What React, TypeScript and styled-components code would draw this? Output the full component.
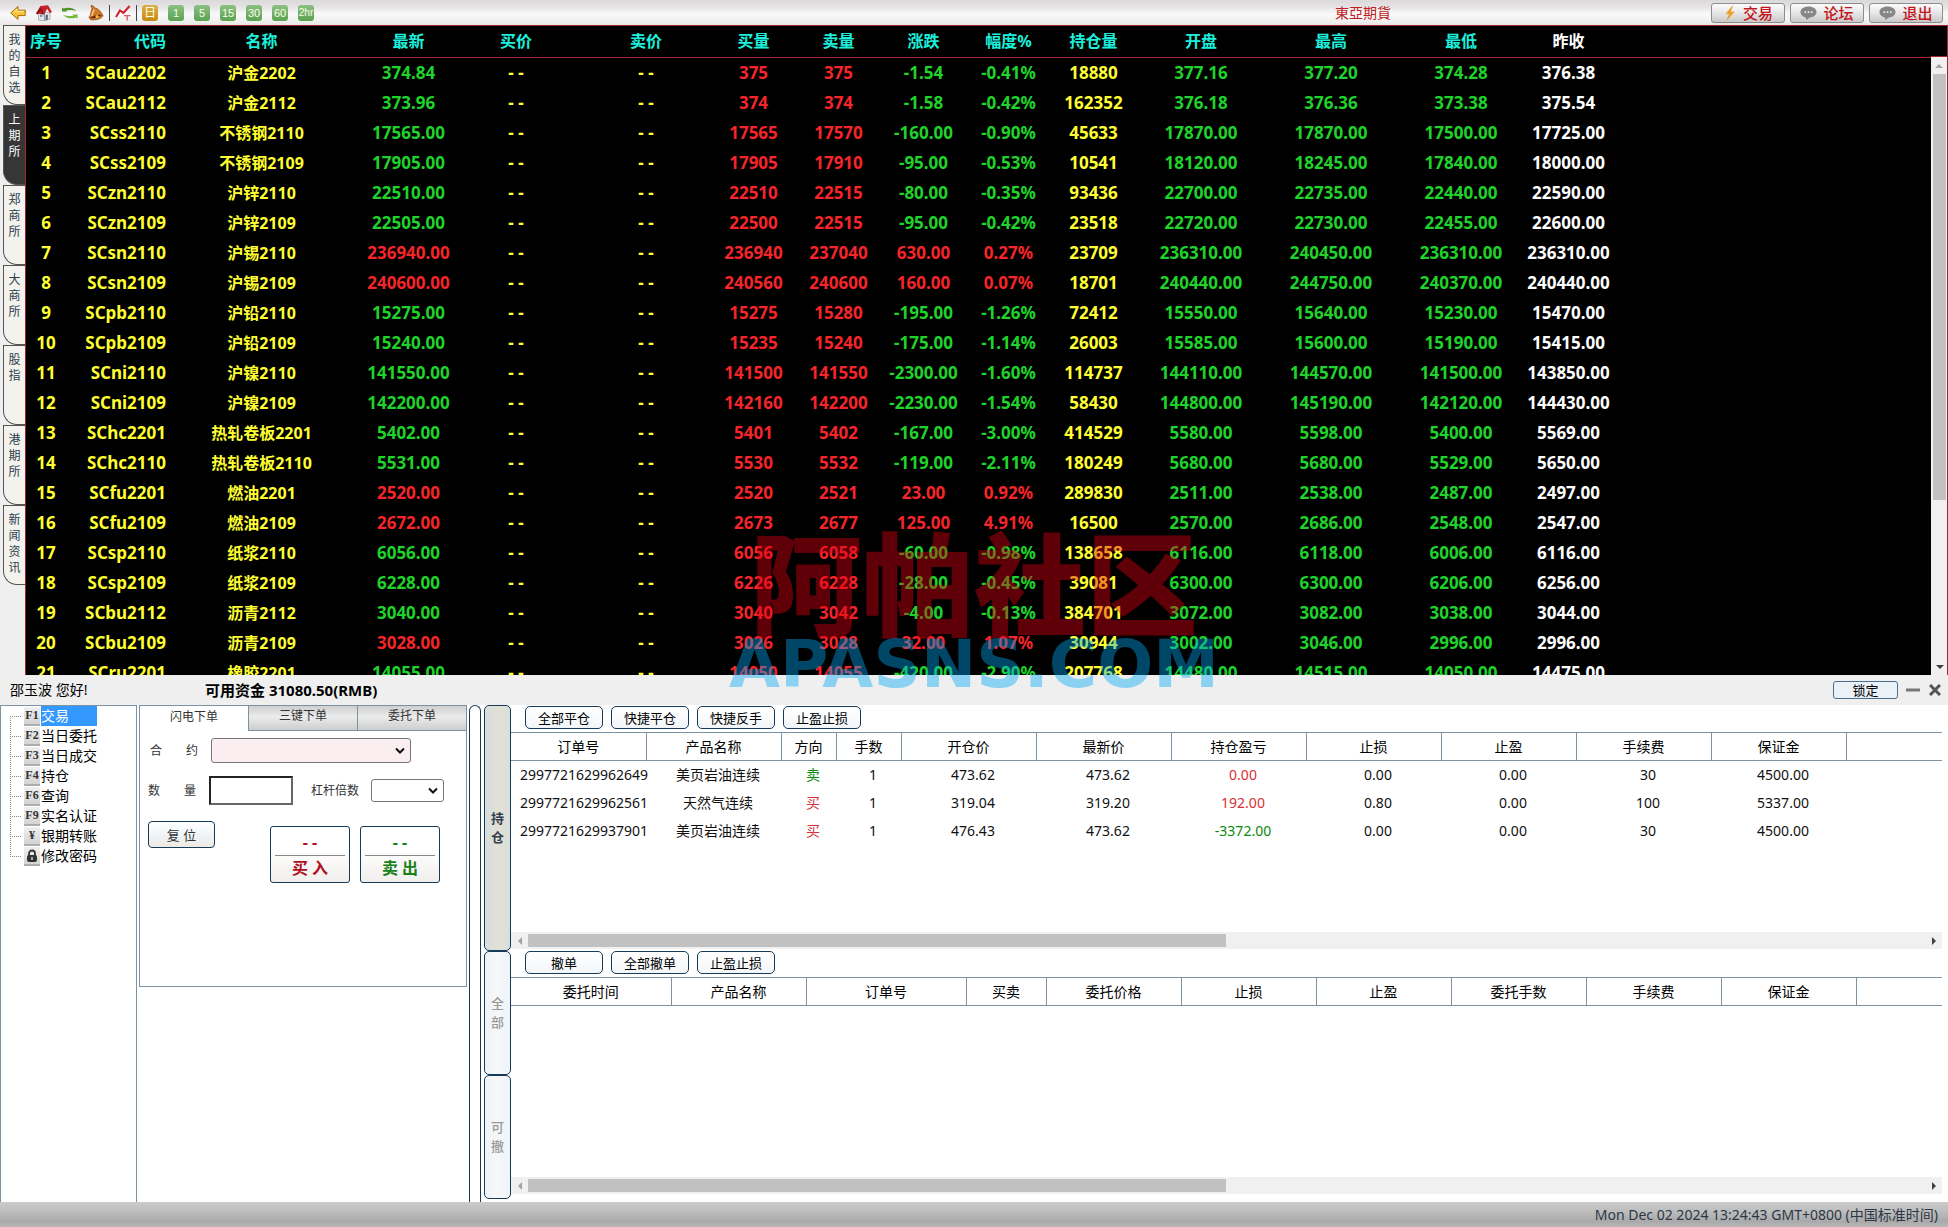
import React, { useState } from "react";
import styled, { createGlobalStyle, css } from "styled-components";

const SANS = `"Noto Sans", "Noto Sans CJK SC", sans-serif`;
const NAVY = "#163a58";
const LINE = "#7c93a6";

const GlobalStyle = createGlobalStyle`
  *, *::before, *::after { box-sizing: border-box; }
  body { margin: 0; background: #efefef; font-family: ${SANS}; font-size: 14px; color: #000; }
  button, input, select { font-family: inherit; color: inherit; margin: 0; padding: 0; }
  button { cursor: pointer; }
  table { border-collapse: collapse; border-spacing: 0; table-layout: fixed; width: 100%; }
  th, td { padding: 0; }
`;

const Page = styled.div`
  display: flex;
  flex-direction: column;
  height: 100vh;
  overflow: hidden;
`;

/* ---------- toolbar ---------- */

const Toolbar = styled.header`
  display: flex;
  align-items: center;
  height: 25px;
  flex: none;
  padding: 0 5px 0 10px;
  background: linear-gradient(#dbd9d9 0%, #e6e4e4 30%, #faf9f9 55%, #f3f2f2 80%, #e8e5e5 100%);
`;

const IconGroup = styled.div`
  display: flex;
  gap: 10px;
`;

const IconButton = styled.button`
  width: 16px;
  height: 16px;
  border: 0;
  background: none;
  display: block;
  svg { display: block; }
`;

const Divider = styled.span`
  width: 1px;
  height: 16px;
  margin: 0 5px;
  background: #444;
`;

const PeriodButton = styled.button<{ $day?: boolean; $long?: boolean }>`
  width: 16px;
  height: 16px;
  border: 0;
  border-radius: 3px;
  font-family: "Liberation Sans", "Noto Sans CJK SC", sans-serif;
  font-size: ${(p) => (p.$day ? 12 : p.$long ? 10 : 11)}px;
  line-height: 16px;
  text-align: center;
  white-space: nowrap;
  color: #fffbe8;
  background: ${(p) =>
    p.$day ? "linear-gradient(#d9b04a, #c58a10)" : "linear-gradient(#8cc084, #5aa350)"};
  display: flex;
  justify-content: center;
`;

const Brand = styled.span`
  margin-left: auto;
  margin-right: 320px;
  font-size: 14px;
  line-height: 20px;
  color: #c01c24;
`;

const HeaderActions = styled.div`
  display: flex;
  gap: 5px;
`;

const HeaderButton = styled.button`
  display: flex;
  align-items: center;
  justify-content: center;
  gap: 6px;
  width: 74px;
  height: 20px;
  border: 1px solid #8d8d8d;
  border-radius: 3px;
  background: linear-gradient(#fbfbfb, #e9e9e9 45%, #c9c9c9);
  font-size: 15px;
  font-weight: 500;
  line-height: 18px;
  color: #c3161c;
`;

/* ---------- quotes ---------- */

const QuoteArea = styled.main`
  position: relative;
  display: flex;
  flex: 1;
  min-height: 0;
`;

const MarketTabs = styled.nav`
  display: flex;
  flex-direction: column;
  width: 25px;
  flex: none;
  padding-left: 3px;
  background: #efefef;
`;

const MarketTab = styled.button<{ $active?: boolean }>`
  display: flex;
  justify-content: center;
  align-items: flex-start;
  width: 22px;
  height: 80px;
  padding-top: 6px;
  border: 1px solid #555;
  border-right: 0;
  border-bottom-left-radius: 14px;
  font-size: 12px;
  line-height: 16px;
  color: ${(p) => (p.$active ? "#fff" : "#2c3e50")};
  background: ${(p) => (p.$active ? "#363636" : "#f3f2ec")};
  span { width: 12px; word-break: break-all; }
`;

const QuotePanel = styled.div`
  display: flex;
  flex: 1;
  min-width: 0;
  overflow: hidden;
  background: #000;
  border: 1px solid #a3252d;
  border-bottom: 0;
`;

const QuoteScroll = styled.div`
  flex: 1;
  min-width: 0;
  overflow: hidden;
`;

const QuoteTable = styled.table`
  font-weight: 700;
  text-align: center;
  white-space: nowrap;
`;

const QuoteHead = styled.th<{ $white?: boolean }>`
  height: 31px;
  border-bottom: 1px solid #a3252d;
  font-size: 16px;
  line-height: 20px;
  color: ${(p) => (p.$white ? "#fff" : "#1cf0dc")};
`;

type Tone = "yellow" | "green" | "red" | "white";
const tones: Record<Tone, string> = {
  yellow: "#ffff32",
  green: "#1fd32b",
  red: "#f5252a",
  white: "#ffffff",
};

const QuoteCell = styled.td<{ $tone: Tone }>`
  height: 30px;
  padding-top: 1px;
  font-size: 17px;
  line-height: 20px;
  color: ${(p) => tones[p.$tone]};
`;

const CodeHead = styled(QuoteHead)`text-align: right;`;
const CodeCell = styled(QuoteCell)`text-align: right;`;
const NameHead = styled(QuoteHead)`padding-right: 9px;`;
const NameCell = styled(QuoteCell)`padding-right: 9px; font-size: 16px;`;

const QuoteRail = styled.div`
  display: flex;
  flex-direction: column;
  width: 16px;
  flex: none;
`;

const RailCap = styled.div`
  height: 31px;
  flex: none;
  border-bottom: 1px solid #a3252d;
`;

const VTrack = styled.div`
  display: flex;
  flex-direction: column;
  align-items: center;
  flex: 1;
  background: #f0f0f0;
`;

const VThumb = styled.div`
  width: 13px;
  height: 69%;
  background: #c1c1c1;
`;

const RailArrow = styled.button<{ $end?: boolean }>`
  display: flex;
  align-items: center;
  justify-content: center;
  width: 17px;
  height: 17px;
  flex: none;
  border: 0;
  background: none;
  ${(p) => p.$end && css`margin: auto 0 0 auto;`}
`;

const Watermark = styled.div`
  position: absolute;
  left: 0;
  right: 0;
  bottom: -22px;
  z-index: 2;
  text-align: center;
  pointer-events: none;
  white-space: nowrap;
`;

const WatermarkName = styled.div`
  font-family: "Noto Sans CJK SC", sans-serif;
  font-weight: 900;
  font-size: 112px;
  line-height: 108px;
  color: rgba(226, 0, 19, 0.42);
`;

const WatermarkSite = styled.div`
  font-family: "DejaVu Sans", sans-serif;
  font-weight: 700;
  font-size: 66px;
  line-height: 64px;
  color: rgba(0, 170, 245, 0.42);
`;

/* ---------- account bar ---------- */

const AccountBar = styled.div`
  display: flex;
  align-items: center;
  height: 30px;
  flex: none;
  padding: 0 6px 0 10px;
  background: #efefef;
  line-height: 20px;
`;

const Greeting = styled.span`width: 195px;`;
const Funds = styled.strong`
  margin-right: auto;
  font-size: 15px;
`;

const LockButton = styled.button`
  width: 65px;
  height: 18px;
  border: 1px solid #4a6f90;
  border-radius: 3px;
  background: #eaf1f7;
  font-size: 13px;
  line-height: 16px;
`;

const WindowButton = styled.button`
  display: flex;
  align-items: center;
  justify-content: center;
  width: 14px;
  height: 16px;
  margin-left: 8px;
  border: 0;
  background: none;
`;

/* ---------- lower area ---------- */

const Desk = styled.section`
  display: flex;
  flex: none;
  background: #fff;
`;

const TreePanel = styled.nav`
  width: 137px;
  flex: none;
  padding: 0 0 0 9px;
  border: 1px solid ${LINE};
  border-bottom: 0;
`;

const TreeList = styled.ul`
  margin: 0;
  padding: 0;
  list-style: none;
`;

const TreeItem = styled.li`
  display: flex;
  align-items: center;
  height: 20px;
  background:
    repeating-linear-gradient(90deg, #888 0 1px, transparent 1px 2px) 0 10px / 12px 1px no-repeat,
    repeating-linear-gradient(180deg, #888 0 1px, transparent 1px 2px) 0 0 / 1px 100% no-repeat;
  &:first-child {
    background-position: 0 10px, 0 10px;
    background-size: 12px 1px, 1px 10px;
  }
  &:last-child { background-size: 12px 1px, 1px 10px; }
`;

const TreeKey = styled.span`
  display: flex;
  align-items: center;
  justify-content: center;
  width: 16px;
  height: 19px;
  margin: 1px 1px 0 14px;
  border-bottom: 2px solid #adadad;
  background: linear-gradient(#f0f0f0, #d4d4d4);
  font-family: "Liberation Serif", serif;
  font-size: 12px;
  font-weight: 700;
  line-height: 17px;
  color: #333;
`;

const TreeLink = styled.a<{ $active?: boolean }>`
  min-width: ${(p) => (p.$active ? 56 : 0)}px;
  line-height: 20px;
  text-decoration: none;
  color: ${(p) => (p.$active ? "#fff" : "#000")};
  background: ${(p) => (p.$active ? "#3399ff" : "none")};
`;

const OrderPanel = styled.div`
  width: 328px;
  height: 282px;
  flex: none;
  margin-left: 2px;
  border: 1px solid ${LINE};
`;

const OrderTabs = styled.div`
  display: flex;
`;

const OrderTab = styled.button<{ $active?: boolean }>`
  flex: 1;
  height: 25px;
  padding-bottom: 4px;
  border: 0;
  font-size: 12px;
  line-height: 18px;
  color: #333;
  background: #fff;
  ${(p) =>
    !p.$active &&
    css`
      border-left: 1px solid ${LINE};
      border-bottom: 1px solid ${LINE};
      background: linear-gradient(#cfcfcf, #ececec 45%, #cdcdcd);
    `}
`;

const Form = styled.form`
  display: flex;
  flex-direction: column;
  padding: 7px 8px 0 8px;
  font-size: 12px;
  color: #333;
`;

const FormRow = styled.div<{ $indent?: boolean }>`
  display: flex;
  align-items: center;
  padding-left: ${(p) => (p.$indent ? 2 : 0)}px;
  margin-bottom: 13px;
`;

const Label = styled.label`
  width: 61px;
  line-height: 16px;
  white-space: nowrap;
`;

const LeverLabel = styled.label`
  margin: 0 12px 0 18px;
  line-height: 16px;
`;

const SelectBox = styled.span<{ $w: number; $h: number; $pink?: boolean }>`
  display: grid;
  align-items: center;
  width: ${(p) => p.$w}px;
  height: ${(p) => p.$h}px;
  border: 1px solid #767676;
  border-radius: 3px;
  background: ${(p) => (p.$pink ? "#faeef0" : "#fff")};
  select, svg { grid-area: 1 / 1; }
  select { appearance: none; width: 100%; height: 100%; border: 0; background: none; padding: 0 4px; }
  svg { justify-self: end; margin-right: 4px; pointer-events: none; }
`;

const AmountInput = styled.input`
  width: 84px;
  height: 29px;
  padding: 0 4px;
  border: 2px solid;
  border-color: #222 #666 #666 #222;
  background: #fff;
`;

const FormActions = styled.div`
  display: flex;
  align-items: flex-start;
  padding-top: 3px;
`;

const ResetButton = styled.button`
  width: 67px;
  height: 27px;
  margin-right: auto;
  border: 1px solid ${NAVY};
  border-radius: 4px;
  background: linear-gradient(#fff, #eef3f6 60%, #efe9e2);
  font-size: 13px;
  color: #333;
`;

const DealButtons = styled.div`
  display: flex;
  gap: 10px;
  padding: 5px 18px 0 0;
`;

const DealButton = styled.button<{ $sell?: boolean }>`
  display: flex;
  flex-direction: column;
  width: 80px;
  height: 57px;
  padding: 3px 4px 0;
  border: 1px solid ${NAVY};
  border-radius: 3px;
  background: linear-gradient(#fff 40%, #f1efec);
  font-size: 16px;
  font-weight: 700;
  color: ${(p) => (p.$sell ? "#178017" : "#b00f1e")};
  text-align: center;
`;

const DealPrice = styled.span`
  height: 26px;
  width: 100%;
  line-height: 24px;
  border-bottom: 1px solid #888;
`;

const DealName = styled.span`
  width: 100%;
  line-height: 24px;
`;

const Splitter = styled.div`
  width: 12px;
  flex: none;
  margin: 0 3px 0 2px;
  border: 1px solid ${NAVY};
  border-bottom: 0;
  border-radius: 6px 6px 0 0;
`;

const SideTabs = styled.div`
  display: flex;
  flex-direction: column;
  width: 27px;
  flex: none;
  margin-bottom: 3px;
`;

const SideTab = styled.button<{ $active?: boolean; $grow: number }>`
  flex: ${(p) => p.$grow} 1 0;
  display: flex;
  justify-content: center;
  align-items: center;
  border: 1px solid ${NAVY};
  border-radius: 5px;
  font-size: 13px;
  line-height: 19px;
  font-weight: ${(p) => (p.$active ? 700 : 500)};
  color: ${(p) => (p.$active ? "#333f4c" : "#999")};
  background: ${(p) =>
    p.$active
      ? "linear-gradient(90deg, #d5dede, #e3e0d6 60%, #d8dedc)"
      : "linear-gradient(90deg, #edf3f8, #f7f7f7 50%, #eef4f9)"};
  span { width: 13px; word-break: break-all; }
`;

const Books = styled.div`
  flex: 1;
  min-width: 0;
  padding: 0 6px 6px 0;
`;

const Book = styled.section`
  display: flex;
  flex-direction: column;
  height: 244px;
  margin-bottom: 1px;
  &:last-child { margin-bottom: 2px; }
`;

const BookActions = styled.div`
  display: flex;
  gap: 8px;
  padding: 1px 14px 3px;
`;

const BookButton = styled.button`
  width: 78px;
  height: 23px;
  border: 1px solid ${NAVY};
  border-radius: 5px;
  background: linear-gradient(#fff, #f3f6f9);
  font-size: 13px;
  line-height: 20px;
`;

const BookBody = styled.div`
  flex: 1;
  overflow: hidden;
`;

const BookTable = styled.table`
  text-align: center;
  white-space: nowrap;
  line-height: 20px;
`;

const BookHead = styled.th`
  height: 28px;
  font-weight: 400;
  border: 1px solid ${LINE};
  &:first-child { border-left: 0; }
  &:last-child { border-right: 0; }
`;

const BookCell = styled.td<{ $color?: string }>`
  height: 28px;
  padding-left: 9px;
  color: ${(p) => p.$color ?? "#111"};
`;

const HTrack = styled.div`
  display: flex;
  align-items: center;
  height: 17px;
  flex: none;
  background: #f0f0f0;
`;

const HThumb = styled.div`
  width: 48.8%;
  height: 13px;
  background: #c1c1c1;
`;

const StatusBar = styled.footer`
  height: 25px;
  flex: none;
  padding-right: 10px;
  background: linear-gradient(#cbcbcb, #bcbcbc 40%, #a9a9a9 78%, #b9b9b9);
  font-size: 14px;
  line-height: 25px;
  text-align: right;
  color: #2c3846;
`;

/* ---------- icons ---------- */

const BackIcon = () => (
  <svg width="16" height="16" viewBox="0 0 16 16">
    <path d="M.8 8 8 1.6v3.6h7.2v5.4H8v3.8z" fill="#f8c534" stroke="#a8690f" strokeLinejoin="round" />
    <path d="M3 7.6 7 4v2.4h7" fill="none" stroke="#fff0a0" />
  </svg>
);
const HomeIcon = () => (
  <svg width="16" height="16" viewBox="0 0 16 16">
    <path d="M2.5 8v7l6 1V7zM8.5 8v8l5.5-2V7z" fill="#e3e6ea" stroke="#868c94" strokeWidth=".6" />
    <path d="M0 8.6 4.4 1 12 .2 16 7l-2.2 1-2.6-4.2L8 9.5z" fill="#c4242c" />
    <path d="M0 8.6 4.6 2.2 8 9 6.6 9.6 4.6 5.4 1.4 9.4z" fill="#8c1219" />
    <path d="M9.6 10.2l2.2-.6v5l-2.2.7z" fill="#56606e" />
    <path d="M4 9.5h2.4v2.4H4z" fill="#7f8ea3" />
  </svg>
);
const RefreshIcon = () => (
  <svg width="16" height="16" viewBox="0 0 16 16">
    <path d="M0 6.4V2.6l1.6 1C5 2.200 11 2 14.400 6 10.800 4.800 6.600 4.800 4 5.600l1.200.8z" fill="#4f9426" />
    <path d="M15.600 9.600v3.800l-1.600-1C10.600 13.800 4.600 14 1.200 10c3.600 1.200 7.800 1.200 10.400.4l-1.200-.8z" fill="#74b83c" />
  </svg>
);
const BellIcon = () => (
  <svg width="16" height="16" viewBox="0 0 16 16">
    <path d="M3 .6C5.400 0 6 1.800 6.600 3c3.600.4 6 3 8.400 7.600 0 2.400-6.600 5-12.400 4.200L1 12.600C3 10 2.600 6.400 4 3.800z" fill="#cf7a26" stroke="#8b4313" strokeWidth=".7" />
    <path d="M2 13c3.600 1 9-.6 12-3-3-1-9.600 1-12 3z" fill="#5f2a10" />
    <path d="M6.400 4.600c-2 2-1.600 4.600-2.800 6.400" stroke="#ffd58a" strokeWidth="1.300" fill="none" />
    <circle cx="9" cy="11.600" r="1.500" fill="#ffc24d" />
  </svg>
);
const TrendIcon = () => (
  <svg width="16" height="16" viewBox="0 0 16 16">
    <path d="M1 12 5 5.400l3.400 2.400L14.600 1" stroke="#cf1f2c" strokeWidth="2" fill="none" />
    <path d="M9 10.600h6.400M12.200 10.600v5" stroke="#e05a64" strokeWidth="1.400" fill="none" />
  </svg>
);
const BoltIcon = () => (
  <svg width="14" height="16" viewBox="0 0 14 16">
    <path d="M9.600.8 3 8.800h3.600L4 15l7-8H7.400z" fill="#f5a01c" stroke="#e08a10" strokeWidth=".4" />
  </svg>
);
const ChatIcon = () => (
  <svg width="17" height="14" viewBox="0 0 17 14">
    <path d="M8.500.5C13 .5 16.500 2.800 16.500 6s-3 5.200-6.500 5.500L6 14v-2.600C2.800 11 .5 8.800.5 6 .5 2.800 4 .5 8.500.5z" fill="#868686" />
    <path d="M4.500 5.300h1.600v1.600H4.500zM7.700 5.300h1.600v1.600H7.700zM10.900 5.300h1.600v1.600h-1.600z" fill="#eee" />
  </svg>
);
const LockIcon = () => (
  <svg width="12" height="14" viewBox="0 0 12 14">
    <path d="M3 7V4.500a3 3 0 0 1 6 0V7" stroke="#333" strokeWidth="1.800" fill="none" />
    <rect x="1" y="6" width="10" height="7" rx="2" fill="#333" />
    <path d="M6 8v3" stroke="#ddd" strokeWidth="1.400" />
  </svg>
);
const Chevron = () => (
  <svg width="12" height="8" viewBox="0 0 12 8">
    <path d="M2 1.500 6 5.500l4-4" stroke="#111" strokeWidth="2" fill="none" />
  </svg>
);

const arrowPaths = {
  up: "M0 6 4 2l4 4z",
  down: "M0 2l4 4 4-4z",
  left: "M6 0 2 4l4 4z",
  right: "M2 0l4 4-4 4z",
};
const Arrow = ({ dir, color }: { dir: keyof typeof arrowPaths; color: string }) => (
  <svg width="8" height="8" viewBox="0 0 8 8">
    <path d={arrowPaths[dir]} fill={color} />
  </svg>
);

/* ---------- data ---------- */

const periods = ["1", "5", "15", "30", "60", "2hr"];
const markets = ["我的自选", "上期所", "郑商所", "大商所", "股指", "港期所", "新闻资讯"];

const quoteHeads = ["买价", "卖价", "买量", "卖量", "涨跌", "幅度%", "持仓量", "开盘", "最高", "最低"];
const quoteWidths = [40, 100, 200, 85, 130, 130, 85, 85, 85, 85, 85, 130, 130, 130, 85];

// code, name, last, bid volume, ask volume, change, change %, open interest, open, high, low, previous close
const quotes = `SCau2202 沪金2202 374.84 375 375 -1.54 -0.41% 18880 377.16 377.20 374.28 376.38
SCau2112 沪金2112 373.96 374 374 -1.58 -0.42% 162352 376.18 376.36 373.38 375.54
SCss2110 不锈钢2110 17565.00 17565 17570 -160.00 -0.90% 45633 17870.00 17870.00 17500.00 17725.00
SCss2109 不锈钢2109 17905.00 17905 17910 -95.00 -0.53% 10541 18120.00 18245.00 17840.00 18000.00
SCzn2110 沪锌2110 22510.00 22510 22515 -80.00 -0.35% 93436 22700.00 22735.00 22440.00 22590.00
SCzn2109 沪锌2109 22505.00 22500 22515 -95.00 -0.42% 23518 22720.00 22730.00 22455.00 22600.00
SCsn2110 沪锡2110 236940.00 236940 237040 630.00 0.27% 23709 236310.00 240450.00 236310.00 236310.00
SCsn2109 沪锡2109 240600.00 240560 240600 160.00 0.07% 18701 240440.00 244750.00 240370.00 240440.00
SCpb2110 沪铅2110 15275.00 15275 15280 -195.00 -1.26% 72412 15550.00 15640.00 15230.00 15470.00
SCpb2109 沪铅2109 15240.00 15235 15240 -175.00 -1.14% 26003 15585.00 15600.00 15190.00 15415.00
SCni2110 沪镍2110 141550.00 141500 141550 -2300.00 -1.60% 114737 144110.00 144570.00 141500.00 143850.00
SCni2109 沪镍2109 142200.00 142160 142200 -2230.00 -1.54% 58430 144800.00 145190.00 142120.00 144430.00
SChc2201 热轧卷板2201 5402.00 5401 5402 -167.00 -3.00% 414529 5580.00 5598.00 5400.00 5569.00
SChc2110 热轧卷板2110 5531.00 5530 5532 -119.00 -2.11% 180249 5680.00 5680.00 5529.00 5650.00
SCfu2201 燃油2201 2520.00 2520 2521 23.00 0.92% 289830 2511.00 2538.00 2487.00 2497.00
SCfu2109 燃油2109 2672.00 2673 2677 125.00 4.91% 16500 2570.00 2686.00 2548.00 2547.00
SCsp2110 纸浆2110 6056.00 6056 6058 -60.00 -0.98% 138658 6116.00 6118.00 6006.00 6116.00
SCsp2109 纸浆2109 6228.00 6226 6228 -28.00 -0.45% 39081 6300.00 6300.00 6206.00 6256.00
SCbu2112 沥青2112 3040.00 3040 3042 -4.00 -0.13% 384701 3072.00 3082.00 3038.00 3044.00
SCbu2109 沥青2109 3028.00 3026 3028 32.00 1.07% 30944 3002.00 3046.00 2996.00 2996.00
SCru2201 橡胶2201 14055.00 14050 14055 -420.00 -2.90% 207768 14480.00 14515.00 14050.00 14475.00`
  .split("\n")
  .map((row) => row.split(" "));

const treeItems: [React.ReactNode, string][] = [
  ["F1", "交易"],
  ["F2", "当日委托"],
  ["F3", "当日成交"],
  ["F4", "持仓"],
  ["F6", "查询"],
  ["F9", "实名认证"],
  ["¥", "银期转账"],
  [<LockIcon />, "修改密码"],
];

const positionHeads = ["订单号", "产品名称", "方向", "手数", "开仓价", "最新价", "持仓盈亏", "止损", "止盈", "手续费", "保证金", ""];
const positionWidths = [135, 135, 55, 65, 135, 135, 135, 135, 135, 135, 135];
const positions = [
  ["2997721629962649", "美页岩油连续", "卖", "1", "473.62", "473.62", "0.00", "0.00", "0.00", "30", "4500.00"],
  ["2997721629962561", "天然气连续", "买", "1", "319.04", "319.20", "192.00", "0.80", "0.00", "100", "5337.00"],
  ["2997721629937901", "美页岩油连续", "买", "1", "476.43", "473.62", "-3372.00", "0.00", "0.00", "30", "4500.00"],
];

const orderHeads = ["委托时间", "产品名称", "订单号", "买卖", "委托价格", "止损", "止盈", "委托手数", "手续费", "保证金", ""];
const orderWidths = [160, 135, 160, 80, 135, 135, 135, 135, 135, 135];

const cellColor = (col: number, value: string) => {
  if (col === 2) return value === "卖" ? "#0a8a0a" : "#d93036";
  if (col === 6) return value.startsWith("-") ? "#0a8a0a" : "#d93036";
  return undefined;
};

/* ---------- parts ---------- */

const Columns = ({ widths }: { widths: number[] }) => (
  <colgroup>
    {widths.map((w, i) => (
      <col key={i} width={w} />
    ))}
    <col />
  </colgroup>
);

const BookView = ({
  actions,
  heads,
  widths,
  rows,
}: {
  actions: string[];
  heads: string[];
  widths: number[];
  rows: string[][];
}) => (
  <Book>
    <BookActions>
      {actions.map((a) => (
        <BookButton key={a}>{a}</BookButton>
      ))}
    </BookActions>
    <BookBody>
      <BookTable>
        <Columns widths={widths} />
        <thead>
          <tr>
            {heads.map((h, i) => (
              <BookHead key={i}>{h}</BookHead>
            ))}
          </tr>
        </thead>
        <tbody>
          {rows.map((row) => (
            <tr key={row[0]}>
              {row.map((value, i) => (
                <BookCell key={i} $color={cellColor(i, value)}>
                  {value}
                </BookCell>
              ))}
            </tr>
          ))}
        </tbody>
      </BookTable>
    </BookBody>
    <HTrack>
      <RailArrow aria-label="向左滚动">
        <Arrow dir="left" color="#a3a3a3" />
      </RailArrow>
      <HThumb />
      <RailArrow $end aria-label="向右滚动">
        <Arrow dir="right" color="#404040" />
      </RailArrow>
    </HTrack>
  </Book>
);

export default function App() {
  const [market, setMarket] = useState("上期所");
  const [amount, setAmount] = useState("");

  return (
    <Page>
      <GlobalStyle />
      <Toolbar>
        <IconGroup>
          <IconButton aria-label="返回"><BackIcon /></IconButton>
          <IconButton aria-label="首页"><HomeIcon /></IconButton>
          <IconButton aria-label="刷新"><RefreshIcon /></IconButton>
          <IconButton aria-label="提醒"><BellIcon /></IconButton>
        </IconGroup>
        <Divider />
        <IconButton aria-label="分时"><TrendIcon /></IconButton>
        <Divider />
        <IconGroup>
          <PeriodButton $day>日</PeriodButton>
          {periods.map((p) => (
            <PeriodButton key={p} $long={p.length > 2}>{p}</PeriodButton>
          ))}
        </IconGroup>
        <Brand>東亞期貨</Brand>
        <HeaderActions>
          <HeaderButton><BoltIcon />交易</HeaderButton>
          <HeaderButton><ChatIcon />论坛</HeaderButton>
          <HeaderButton><ChatIcon />退出</HeaderButton>
        </HeaderActions>
      </Toolbar>

      <QuoteArea>
        <MarketTabs>
          {markets.map((m) => (
            <MarketTab key={m} $active={m === market} onClick={() => setMarket(m)}>
              <span>{m}</span>
            </MarketTab>
          ))}
        </MarketTabs>
        <QuotePanel>
          <QuoteScroll>
            <QuoteTable>
              <Columns widths={quoteWidths} />
              <thead>
                <tr>
                  <QuoteHead>序号</QuoteHead>
                  <CodeHead>代码</CodeHead>
                  <NameHead>名称</NameHead>
                  <QuoteHead>最新</QuoteHead>
                  {quoteHeads.map((h) => (
                    <QuoteHead key={h}>{h}</QuoteHead>
                  ))}
                  <QuoteHead $white>昨收</QuoteHead>
                  <QuoteHead />
                </tr>
              </thead>
              <tbody>
                {quotes.map(([code, name, last, bidVol, askVol, change, pct, interest, open, high, low, prev], i) => {
                  const tone: Tone = change.startsWith("-") ? "green" : "red";
                  return (
                    <tr key={code}>
                      <QuoteCell $tone="yellow">{i + 1}</QuoteCell>
                      <CodeCell $tone="yellow">{code}</CodeCell>
                      <NameCell $tone="yellow">{name}</NameCell>
                      <QuoteCell $tone={tone}>{last}</QuoteCell>
                      <QuoteCell $tone="yellow">- -</QuoteCell>
                      <QuoteCell $tone="yellow">- -</QuoteCell>
                      <QuoteCell $tone="red">{bidVol}</QuoteCell>
                      <QuoteCell $tone="red">{askVol}</QuoteCell>
                      <QuoteCell $tone={tone}>{change}</QuoteCell>
                      <QuoteCell $tone={tone}>{pct}</QuoteCell>
                      <QuoteCell $tone="yellow">{interest}</QuoteCell>
                      <QuoteCell $tone="green">{open}</QuoteCell>
                      <QuoteCell $tone="green">{high}</QuoteCell>
                      <QuoteCell $tone="green">{low}</QuoteCell>
                      <QuoteCell $tone="white">{prev}</QuoteCell>
                    </tr>
                  );
                })}
              </tbody>
            </QuoteTable>
          </QuoteScroll>
          <QuoteRail>
            <RailCap />
            <VTrack>
              <RailArrow aria-label="向上滚动"><Arrow dir="up" color="#a3a3a3" /></RailArrow>
              <VThumb />
              <RailArrow $end aria-label="向下滚动"><Arrow dir="down" color="#404040" /></RailArrow>
            </VTrack>
          </QuoteRail>
        </QuotePanel>
        <Watermark>
          <WatermarkName>阿帕社区</WatermarkName>
          <WatermarkSite>APASNS.COM</WatermarkSite>
        </Watermark>
      </QuoteArea>

      <AccountBar>
        <Greeting>邵玉波 您好!</Greeting>
        <Funds>可用资金 31080.50(RMB)</Funds>
        <LockButton>锁定</LockButton>
        <WindowButton aria-label="最小化">
          <svg width="14" height="4" viewBox="0 0 14 4"><path d="M0 2h14" stroke="#777" strokeWidth="3" /></svg>
        </WindowButton>
        <WindowButton aria-label="关闭">
          <svg width="12" height="12" viewBox="0 0 12 12"><path d="M1 1l10 10M11 1 1 11" stroke="#555" strokeWidth="3" /></svg>
        </WindowButton>
      </AccountBar>

      <Desk>
        <TreePanel>
          <TreeList>
            {treeItems.map(([key, label], i) => (
              <TreeItem key={label}>
                <TreeKey>{key}</TreeKey>
                <TreeLink href="#" $active={i === 0}>{label}</TreeLink>
              </TreeItem>
            ))}
          </TreeList>
        </TreePanel>

        <OrderPanel>
          <OrderTabs>
            <OrderTab $active>闪电下单</OrderTab>
            <OrderTab>三键下单</OrderTab>
            <OrderTab>委托下单</OrderTab>
          </OrderTabs>
          <Form onSubmit={(e) => e.preventDefault()}>
            <FormRow $indent>
              <Label htmlFor="contract">合{"\u3000\u3000"}约</Label>
              <SelectBox $w={200} $h={25} $pink>
                <select id="contract" />
                <Chevron />
              </SelectBox>
            </FormRow>
            <FormRow>
              <Label htmlFor="amount">数{"\u3000\u3000"}量</Label>
              <AmountInput id="amount" value={amount} onChange={(e) => setAmount(e.target.value)} />
              <LeverLabel htmlFor="lever">杠杆倍数</LeverLabel>
              <SelectBox $w={73} $h={23}>
                <select id="lever" />
                <Chevron />
              </SelectBox>
            </FormRow>
            <FormActions>
              <ResetButton type="reset">复 位</ResetButton>
              <DealButtons>
                <DealButton type="button">
                  <DealPrice>- -</DealPrice>
                  <DealName>买 入</DealName>
                </DealButton>
                <DealButton type="button" $sell>
                  <DealPrice>- -</DealPrice>
                  <DealName>卖 出</DealName>
                </DealButton>
              </DealButtons>
            </FormActions>
          </Form>
        </OrderPanel>

        <Splitter />

        <SideTabs>
          <SideTab $active $grow={2}><span>持仓</span></SideTab>
          <SideTab $grow={1}><span>全部</span></SideTab>
          <SideTab $grow={1}><span>可撤</span></SideTab>
        </SideTabs>

        <Books>
          <BookView
            actions={["全部平仓", "快捷平仓", "快捷反手", "止盈止损"]}
            heads={positionHeads}
            widths={positionWidths}
            rows={positions}
          />
          <BookView
            actions={["撤单", "全部撤单", "止盈止损"]}
            heads={orderHeads}
            widths={orderWidths}
            rows={[]}
          />
        </Books>
      </Desk>

      <StatusBar>Mon Dec 02 2024 13:24:43 GMT+0800 (中国标准时间)</StatusBar>
    </Page>
  );
}
